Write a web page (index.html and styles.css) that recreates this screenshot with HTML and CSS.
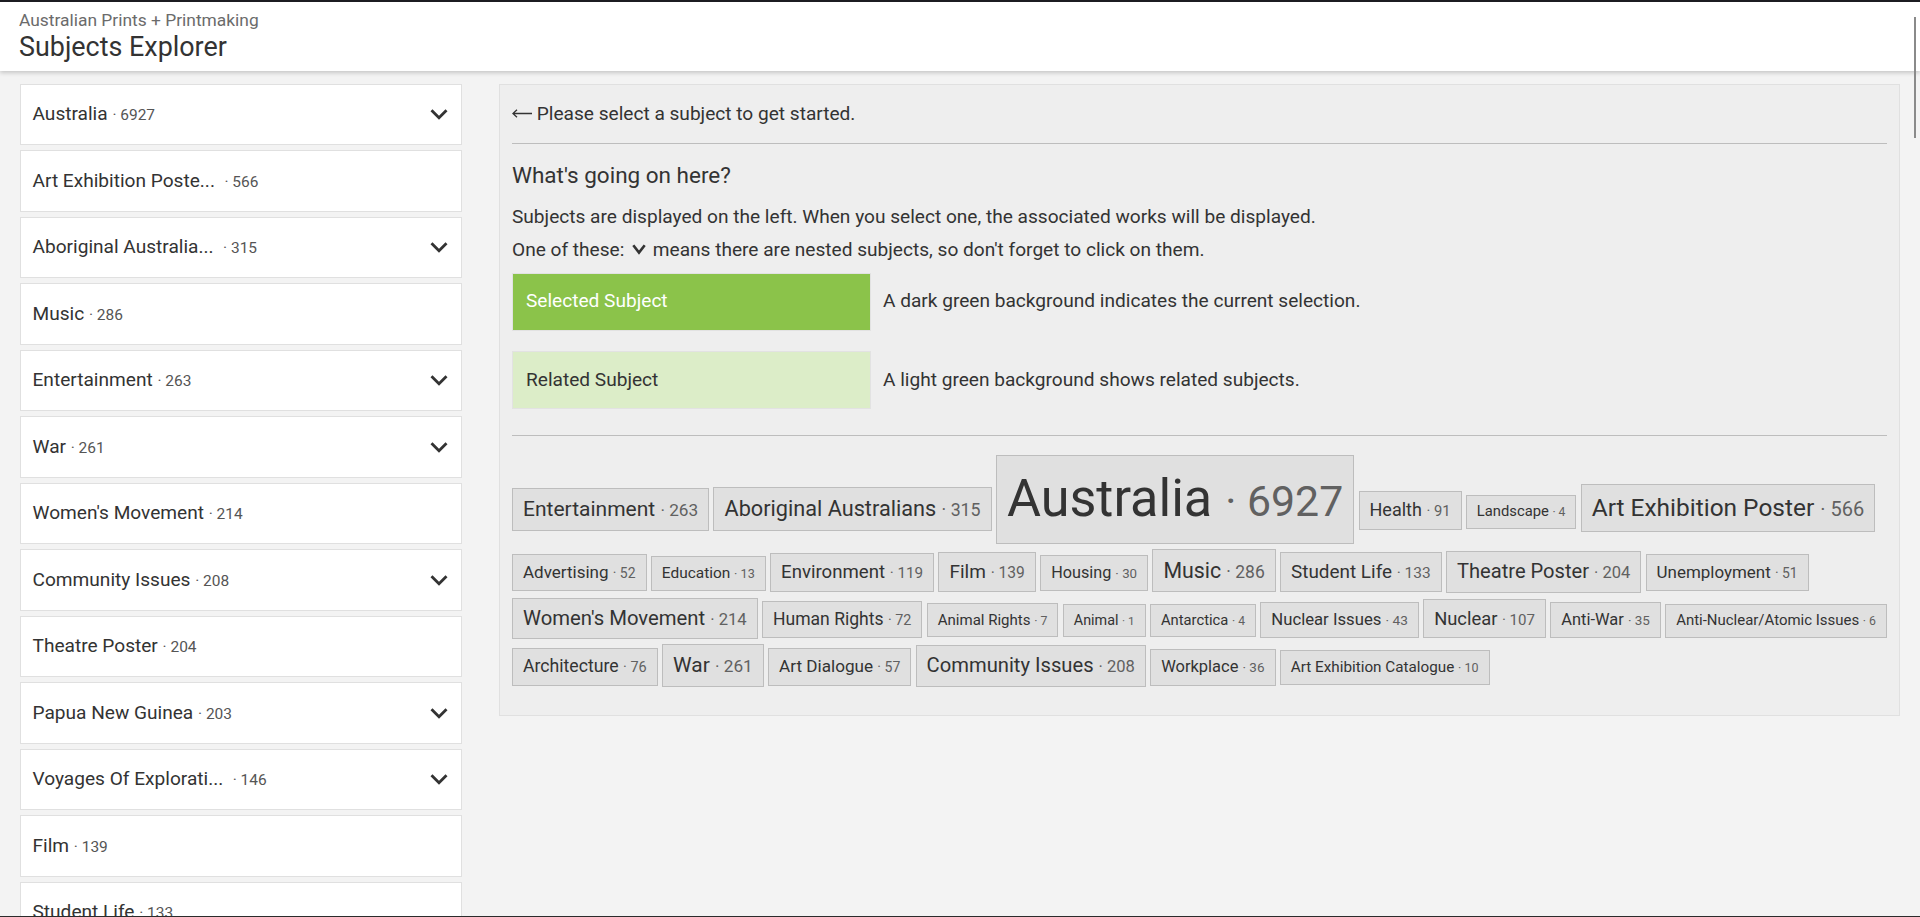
FILE: index.html
```html
<!DOCTYPE html>
<html lang="en">
<head>
<meta charset="utf-8">
<title>Subjects Explorer</title>
<link rel="stylesheet" href="styles.css">
</head>
<body>
<header class="header">
  <div class="subtitle">Australian Prints + Printmaking</div>
  <h1 class="title">Subjects Explorer</h1>
</header>
<main class="layout">
  <nav class="sidebar">
    <div class="item"><span class="name">Australia <span class="count">· 6927</span></span><svg class="chev" viewBox="0 0 24 24"><path d="M16.59 8.59 12 13.17 7.41 8.59 6 10l6 6 6-6z"/></svg></div>
    <div class="item"><span class="name">Art Exhibition Poste...&nbsp; <span class="count">· 566</span></span></div>
    <div class="item"><span class="name">Aboriginal Australia...&nbsp; <span class="count">· 315</span></span><svg class="chev" viewBox="0 0 24 24"><path d="M16.59 8.59 12 13.17 7.41 8.59 6 10l6 6 6-6z"/></svg></div>
    <div class="item"><span class="name">Music <span class="count">· 286</span></span></div>
    <div class="item"><span class="name">Entertainment <span class="count">· 263</span></span><svg class="chev" viewBox="0 0 24 24"><path d="M16.59 8.59 12 13.17 7.41 8.59 6 10l6 6 6-6z"/></svg></div>
    <div class="item"><span class="name">War <span class="count">· 261</span></span><svg class="chev" viewBox="0 0 24 24"><path d="M16.59 8.59 12 13.17 7.41 8.59 6 10l6 6 6-6z"/></svg></div>
    <div class="item"><span class="name">Women's Movement <span class="count">· 214</span></span></div>
    <div class="item"><span class="name">Community Issues <span class="count">· 208</span></span><svg class="chev" viewBox="0 0 24 24"><path d="M16.59 8.59 12 13.17 7.41 8.59 6 10l6 6 6-6z"/></svg></div>
    <div class="item"><span class="name">Theatre Poster <span class="count">· 204</span></span></div>
    <div class="item"><span class="name">Papua New Guinea <span class="count">· 203</span></span><svg class="chev" viewBox="0 0 24 24"><path d="M16.59 8.59 12 13.17 7.41 8.59 6 10l6 6 6-6z"/></svg></div>
    <div class="item"><span class="name">Voyages Of Explorati...&nbsp; <span class="count">· 146</span></span><svg class="chev" viewBox="0 0 24 24"><path d="M16.59 8.59 12 13.17 7.41 8.59 6 10l6 6 6-6z"/></svg></div>
    <div class="item"><span class="name">Film <span class="count">· 139</span></span></div>
    <div class="item"><span class="name">Student Life <span class="count">· 133</span></span></div>
  </nav>
  <section class="panel">
    <p class="hint"><svg class="arrow" viewBox="0 0 20 13"><path d="M0.8 6.5H20M5 2.8 0.9 6.5 5 10.2"/></svg> Please select a subject to get started.</p>
    <hr class="rule rule-top">
    <h2 class="heading">What's going on here?</h2>
    <p class="text text-first">Subjects are displayed on the left. When you select one, the associated works will be displayed.</p>
    <p class="text text-second">One of these: <svg class="inline-chev" viewBox="0 0 16 13"><polyline points="2.3,2.3 8,9.6 13.7,2.3"/></svg> means there are nested subjects, so don't forget to click on them.</p>
    <div class="legend legend-first"><div class="swatch swatch-selected">Selected Subject</div><span class="legend-text">A dark green background indicates the current selection.</span></div>
    <div class="legend legend-second"><div class="swatch swatch-related">Related Subject</div><span class="legend-text">A light green background shows related subjects.</span></div>
    <hr class="rule rule-bottom">
    <div class="cloud">
      <div class="cloud-row">
        <span class="tag" style="font-size:21.00px">Entertainment <span class="tag-count">· 263</span></span>
        <span class="tag" style="font-size:21.69px">Aboriginal Australians <span class="tag-count">· 315</span></span>
        <span class="tag" style="font-size:52.20px">Australia <span class="tag-count">· 6927</span></span>
        <span class="tag" style="font-size:18.02px">Health <span class="tag-count">· 91</span></span>
        <span class="tag" style="font-size:14.77px">Landscape <span class="tag-count">· 4</span></span>
        <span class="tag" style="font-size:24.45px">Art Exhibition Poster <span class="tag-count">· 566</span></span>
      </div>
      <div class="cloud-row">
        <span class="tag" style="font-size:17.00px">Advertising <span class="tag-count">· 52</span></span>
        <span class="tag" style="font-size:15.44px">Education <span class="tag-count">· 13</span></span>
        <span class="tag" style="font-size:18.63px">Environment <span class="tag-count">· 119</span></span>
        <span class="tag" style="font-size:19.02px">Film <span class="tag-count">· 139</span></span>
        <span class="tag" style="font-size:16.24px">Housing <span class="tag-count">· 30</span></span>
        <span class="tag" style="font-size:21.32px">Music <span class="tag-count">· 286</span></span>
        <span class="tag" style="font-size:18.91px">Student Life <span class="tag-count">· 133</span></span>
        <span class="tag" style="font-size:20.13px">Theatre Poster <span class="tag-count">· 204</span></span>
        <span class="tag" style="font-size:16.97px">Unemployment <span class="tag-count">· 51</span></span>
      </div>
      <div class="cloud-row">
        <span class="tag" style="font-size:20.29px">Women's Movement <span class="tag-count">· 214</span></span>
        <span class="tag" style="font-size:17.56px">Human Rights <span class="tag-count">· 72</span></span>
        <span class="tag" style="font-size:15.04px">Animal Rights <span class="tag-count">· 7</span></span>
        <span class="tag" style="font-size:14.36px">Animal <span class="tag-count">· 1</span></span>
        <span class="tag" style="font-size:14.77px">Antarctica <span class="tag-count">· 4</span></span>
        <span class="tag" style="font-size:16.71px">Nuclear Issues <span class="tag-count">· 43</span></span>
        <span class="tag" style="font-size:18.38px">Nuclear <span class="tag-count">· 107</span></span>
        <span class="tag" style="font-size:16.43px">Anti-War <span class="tag-count">· 35</span></span>
        <span class="tag" style="font-size:14.96px">Anti-Nuclear/Atomic Issues <span class="tag-count">· 6</span></span>
      </div>
      <div class="cloud-row">
        <span class="tag" style="font-size:17.66px">Architecture <span class="tag-count">· 76</span></span>
        <span class="tag" style="font-size:20.98px">War <span class="tag-count">· 261</span></span>
        <span class="tag" style="font-size:17.14px">Art Dialogue <span class="tag-count">· 57</span></span>
        <span class="tag" style="font-size:20.20px">Community Issues <span class="tag-count">· 208</span></span>
        <span class="tag" style="font-size:16.47px">Workplace <span class="tag-count">· 36</span></span>
        <span class="tag" style="font-size:15.25px">Art Exhibition Catalogue <span class="tag-count">· 10</span></span>
      </div>
    </div>
  </section>
</main>
<div class="scrollbar"></div>
<div class="bottom-edge"></div>
</body>
</html>
```

FILE: styles.css
```css
html, body {
  margin: 0;
  height: 100%;
  overflow: hidden;
}

body {
  font-family: Roboto, "Liberation Sans", Arial, sans-serif;
  font-size: 19.1px;
  line-height: 1.5;
  color: #333;
  background: #f3f3f3;
}

.header {
  position: relative;
  z-index: 2;
  background: #fff;
  border-top: 2px solid #1c1c21;
  padding: 7.9px 19px 8.2px;
  line-height: normal;
  box-shadow: 0 2px 4px rgba(0, 0, 0, 0.18);
}

.subtitle {
  font-size: 17.4px;
  color: #6b6b6b;
}

.title {
  margin: 1px 0 0;
  font-size: 26.9px;
  font-weight: 400;
  color: #333;
}

.layout {
  display: grid;
  grid-template-columns: 442px minmax(0, 1fr);
  column-gap: 37.5px;
  align-items: start;
  padding: 12.5px 20px 0 19.5px;
}

.sidebar {
  display: flex;
  flex-direction: column;
  gap: 5px;
}

.item {
  box-sizing: border-box;
  height: 61.5px;
  display: flex;
  align-items: center;
  justify-content: space-between;
  padding: 0 5px 0 12px;
  background: #fff;
  border: 1px solid #e0e0e0;
  white-space: nowrap;
}

.name {
  color: #333;
}

.count {
  font-size: 0.81em;
  color: #555;
}

.chev {
  width: 34px;
  height: 34px;
  fill: #333;
  flex: none;
}

.panel {
  background: #eee;
  border: 1px solid #e0e0e0;
  padding: 0 12px 27.3px;
}

.hint {
  margin: 15.6px 0 0;
}

.arrow {
  width: 20px;
  height: 13px;
  fill: none;
  stroke: #333;
  stroke-width: 1.3;
}

.rule {
  border: 0;
  border-top: 1px solid #bdbdbd;
  height: 0;
}

.rule-top {
  margin: 14.3px 0 0;
}

.heading {
  margin: 17.8px 0 0;
  font-size: 22.5px;
  font-weight: 400;
  line-height: 1.2;
}

.text {
  margin: 0;
}

.text-first {
  margin-top: 13.8px;
}

.text-second {
  margin-top: 4.6px;
}

.inline-chev {
  width: 16px;
  height: 13px;
  margin: 0 1.5px;
  fill: none;
  stroke: #333;
  stroke-width: 2.6;
}

.legend {
  display: flex;
  align-items: center;
  gap: 12.3px;
}

.legend-first {
  margin-top: 8px;
}

.legend-second {
  margin-top: 20px;
}

.swatch {
  box-sizing: border-box;
  width: 358.7px;
  height: 58.3px;
  display: flex;
  align-items: center;
  padding: 0 13px;
  border: 1px solid #e2e2e2;
}

.swatch-selected {
  background: #8bc34a;
  color: #fff;
}

.swatch-related {
  background: #dcedc8;
  color: #333;
}

.rule-bottom {
  margin: 25.4px 0 0;
}

.cloud {
  margin-top: 19.7px;
  display: flex;
  flex-direction: column;
  gap: 5px;
}

.cloud-row {
  display: flex;
  align-items: baseline;
  gap: 4.3px;
}

.tag {
  display: block;
  padding: 5px 10px;
  line-height: 1.47;
  background: #e0e0e0;
  border: 1px solid #bdbdbd;
  color: #333;
  white-space: nowrap;
}

.tag-count {
  font-size: 0.82em;
  color: #616161;
}

.scrollbar {
  position: fixed;
  top: 17px;
  right: 4px;
  width: 2px;
  height: 121px;
  background: #8a8a8a;
  z-index: 3;
}

.bottom-edge {
  position: fixed;
  left: 0;
  right: 0;
  bottom: 0;
  height: 1px;
  background: #2b2b2b;
  z-index: 3;
}
```
